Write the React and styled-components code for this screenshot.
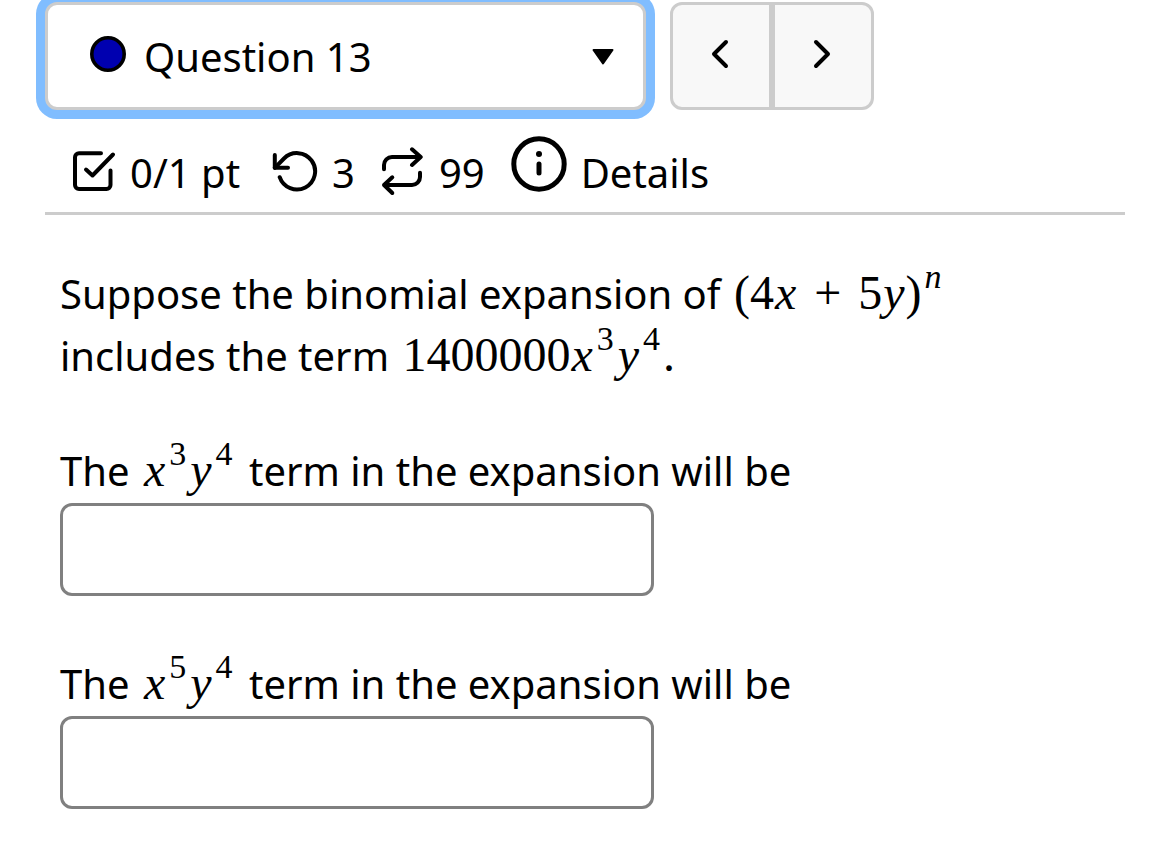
import React, { useState } from "react";
import styled, { createGlobalStyle } from "styled-components";

const GlobalStyle = createGlobalStyle`
  * {
    box-sizing: border-box;
  }
  body {
    margin: 0;
    background: #fff;
    color: #000;
    font-family: "Noto Sans", "Open Sans", sans-serif;
    font-size: 40px;
  }
`;

const Page = styled.main`
  padding: 2px 45px 24px;
`;

const Toolbar = styled.nav`
  display: flex;
  gap: 24px;
  height: 108px;
`;

const Picker = styled.div`
  position: relative;
  flex: 0 1 601px;
`;

const PickerSelect = styled.select`
  appearance: none;
  width: 100%;
  height: 100%;
  padding: 0 64px 0 96px;
  border: 3px solid #ccc;
  border-radius: 12px;
  outline: none;
  background: #fff;
  box-shadow: 0 0 0 9px #80bdff;
  color: inherit;
  font: inherit;
`;

const StatusDot = styled.svg`
  position: absolute;
  left: 45px;
  top: 34px;
  pointer-events: none;
`;

const Caret = styled.svg`
  position: absolute;
  right: 32px;
  top: 46px;
  pointer-events: none;
`;

const Pager = styled.div`
  display: flex;
`;

const PagerButton = styled.button`
  display: flex;
  align-items: center;
  justify-content: center;
  width: 102px;
  padding: 0 2px 4px 0;
  border: 3px solid #ccc;
  border-radius: ${(p) => (p.$side === "left" ? "12px 0 0 12px" : "0 12px 12px 0")};
  background: #f8f8f8;
  color: inherit;
`;

const Meta = styled.div`
  display: flex;
  align-items: center;
  gap: 26px;
  height: 105px;
  padding: 22px 27px 0;
  border-bottom: 3px solid #ccc;
`;

const MetaItem = styled.span`
  display: flex;
  align-items: center;
  gap: 14px;
  white-space: nowrap;
`;

const Score = styled(MetaItem)`
  min-width: 174px;
`;

const DetailsButton = styled.button`
  display: flex;
  align-items: center;
  gap: 14px;
  padding: 0;
  border: 0;
  background: none;
  color: inherit;
  font: inherit;
`;

const Icon = styled.svg`
  flex: none;
  fill: none;
  stroke: currentColor;
  stroke-width: ${(p) => p.$weight || 4};
  stroke-linecap: round;
  stroke-linejoin: round;
`;

const InfoIcon = styled(Icon)`
  margin-bottom: 16px;
`;

const Question = styled.section`
  padding: 48px 15px 0;
`;

const Prompt = styled.p`
  max-width: 930px;
  margin: 0 0 52px;
  line-height: 62px;
`;

const Field = styled.div`
  & + & {
    margin-top: 56px;
  }
`;

const FieldLabel = styled.label`
  display: block;
  line-height: 64px;
`;

const Answer = styled.input`
  display: block;
  width: 100%;
  max-width: 594px;
  height: 93px;
  padding: 0 16px;
  border: 3px solid #808080;
  border-radius: 12px;
  background: #fff;
  font: inherit;
`;

const MathText = styled.span`
  padding: 0 3px;
  font-family: "Liberation Serif", serif;
  font-size: 48px;
  line-height: 0;
  white-space: nowrap;
`;

const Var = styled.i`
  padding: 0 1px;
`;

const Sup = styled.span`
  padding: 0 3px;
  font-size: 34px;
  font-style: ${(p) => (p.$italic ? "italic" : "normal")};
  vertical-align: 21px;
`;

const Op = styled.span`
  padding: 0 17px;
`;

// x^a y^b
const Term = ({ a, b }) => (
  <>
    <Var>x</Var>
    <Sup>{a}</Sup>
    <Var>y</Var>
    <Sup>{b}</Sup>
  </>
);

const fields = [
  { id: "term1", a: 3, b: 4 },
  { id: "term2", a: 5, b: 4 },
];

export default function App() {
  const [answers, setAnswers] = useState({});

  return (
    <>
      <GlobalStyle />
      <Page>
        <Toolbar>
          <Picker>
            <PickerSelect aria-label="Question">
              <option>Question 13</option>
            </PickerSelect>
            <StatusDot width="36" height="36" viewBox="0 0 36 36">
              <circle cx="18" cy="18" r="16.2" fill="#0000b0" stroke="#000" strokeWidth="3.6" />
            </StatusDot>
            <Caret width="22" height="18" viewBox="0 0 22 18">
              <path
                d="M1.5 2h19L11 15.5z"
                stroke="#000"
                strokeWidth="2"
                strokeLinejoin="round"
              />
            </Caret>
          </Picker>
          <Pager>
            <PagerButton $side="left" aria-label="Previous question">
              <Icon width="18" height="30" viewBox="0 0 18 30">
                <path d="M15 3L3 15l12 12" />
              </Icon>
            </PagerButton>
            <PagerButton $side="right" aria-label="Next question">
              <Icon width="18" height="30" viewBox="0 0 18 30">
                <path d="M3 3l12 12L3 27" />
              </Icon>
            </PagerButton>
          </Pager>
        </Toolbar>

        <Meta>
          <Score>
            <Icon width="44" height="44" viewBox="0 0 44 44">
              <path d="M29 3.3H7a4 4 0 0 0-4 4V35a4 4 0 0 0 4 4H34.5a4 4 0 0 0 4-4V20.5" />
              <path d="M14 19.5l6.5 6L41 4.5" />
            </Icon>
            0/1 pt
          </Score>
          <MetaItem>
            <Icon width="46" height="44" viewBox="0 0 46 44">
              <path d="M2.8 5V17.8H16" />
              <path d="M7.7 27.2A18.2 18.2 0 1 0 12 8.5L2.8 17.8" />
            </Icon>
            3
          </MetaItem>
          <MetaItem>
            <Icon width="44" height="50" viewBox="0 0 44 50">
              <path d="M3 22.3V18a8 8 0 0 1 8-8h28M31 2.3l8.7 7.7-8.7 8" />
              <path d="M39 25.7V30a8 8 0 0 1-8 8H3M11.3 30.3L3 38l8.3 8" />
            </Icon>
            99
          </MetaItem>
          <DetailsButton type="button">
            <InfoIcon $weight={5} width="56" height="56" viewBox="0 0 56 56">
              <circle cx="28" cy="28" r="25.2" />
              <circle cx="28" cy="18" r="3" fill="currentColor" stroke="none" />
              <path d="M28 28v9" />
            </InfoIcon>
            Details
          </DetailsButton>
        </Meta>

        <Question>
          <Prompt>
            Suppose the binomial expansion of{" "}
            <MathText>
              (4<Var>x</Var>
              <Op>+</Op>5<Var>y</Var>)<Sup $italic>n</Sup>
            </MathText>{" "}
            includes the term{" "}
            <MathText>
              1400000
              <Term a={3} b={4} />.
            </MathText>
          </Prompt>
          {fields.map(({ id, a, b }) => (
            <Field key={id}>
              <FieldLabel htmlFor={id}>
                The{" "}
                <MathText>
                  <Term a={a} b={b} />
                </MathText>{" "}
                term in the expansion will be
              </FieldLabel>
              <Answer
                id={id}
                type="text"
                autoComplete="off"
                value={answers[id] || ""}
                onChange={(e) => setAnswers({ ...answers, [id]: e.target.value })}
              />
            </Field>
          ))}
        </Question>
      </Page>
    </>
  );
}
